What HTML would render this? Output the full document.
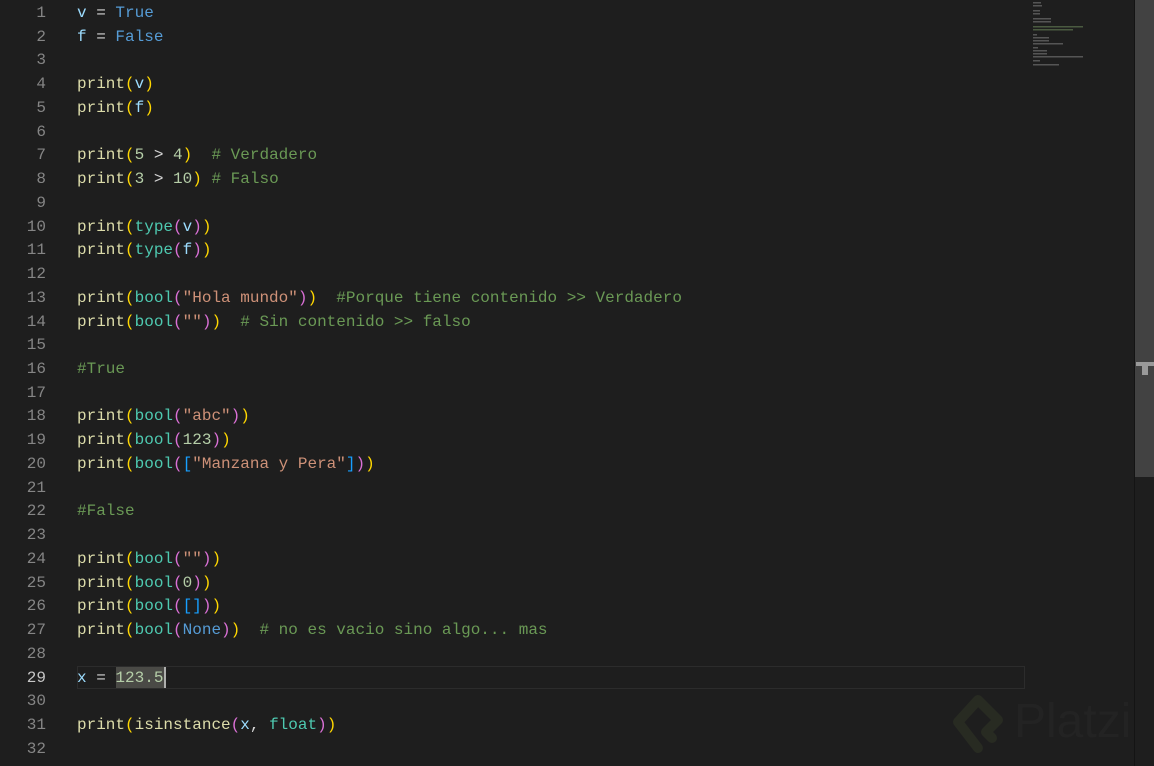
<!DOCTYPE html><html><head><style>
body{margin:0;background:#1e1e1e;width:1154px;height:766px;overflow:hidden;position:relative;font-family:"Liberation Mono",monospace;font-size:16px}
.ln{position:absolute;left:0;width:46px;text-align:right;color:#858585;line-height:23.74px}
.code{position:absolute;left:77px;top:2px;line-height:23.74px;color:#d4d4d4;white-space:pre}
.p{color:#dcdcaa}.g{color:#ffd700}.m{color:#da70d6}.b{color:#179fff}.v{color:#9cdcfe}.k{color:#569cd6}.n{color:#b5cea8}.s{color:#ce9178}.c{color:#6a9955}.t{color:#4ec9b0}
</style></head><body>
<div style="position:absolute;left:77px;top:666px;width:946px;height:21px;border:1px solid #2c2c2c"></div>
<div style="position:absolute;left:116px;top:667px;width:48px;height:21px;background:#4a4a46"></div>
<div style="position:absolute;left:164px;top:667px;width:2px;height:21px;background:#aeafad"></div>
<div class="ln" style="top:2px">1<br>2<br>3<br>4<br>5<br>6<br>7<br>8<br>9<br>10<br>11<br>12<br>13<br>14<br>15<br>16<br>17<br>18<br>19<br>20<br>21<br>22<br>23<br>24<br>25<br>26<br>27<br>28<br><span style="color:#c6c6c6">29</span><br>30<br>31<br>32</div>
<div class="code"><span class="v">v</span> = <span class="k">True</span>
<span class="v">f</span> = <span class="k">False</span>

<span class="p">print</span><span class="g">(</span><span class="v">v</span><span class="g">)</span>
<span class="p">print</span><span class="g">(</span><span class="v">f</span><span class="g">)</span>

<span class="p">print</span><span class="g">(</span><span class="n">5</span> &gt; <span class="n">4</span><span class="g">)</span>  <span class="c"># Verdadero</span>
<span class="p">print</span><span class="g">(</span><span class="n">3</span> &gt; <span class="n">10</span><span class="g">)</span> <span class="c"># Falso</span>

<span class="p">print</span><span class="g">(</span><span class="t">type</span><span class="m">(</span><span class="v">v</span><span class="m">)</span><span class="g">)</span>
<span class="p">print</span><span class="g">(</span><span class="t">type</span><span class="m">(</span><span class="v">f</span><span class="m">)</span><span class="g">)</span>

<span class="p">print</span><span class="g">(</span><span class="t">bool</span><span class="m">(</span><span class="s">"Hola mundo"</span><span class="m">)</span><span class="g">)</span>  <span class="c">#Porque tiene contenido &gt;&gt; Verdadero</span>
<span class="p">print</span><span class="g">(</span><span class="t">bool</span><span class="m">(</span><span class="s">""</span><span class="m">)</span><span class="g">)</span>  <span class="c"># Sin contenido &gt;&gt; falso</span>

<span class="c">#True</span>

<span class="p">print</span><span class="g">(</span><span class="t">bool</span><span class="m">(</span><span class="s">"abc"</span><span class="m">)</span><span class="g">)</span>
<span class="p">print</span><span class="g">(</span><span class="t">bool</span><span class="m">(</span><span class="n">123</span><span class="m">)</span><span class="g">)</span>
<span class="p">print</span><span class="g">(</span><span class="t">bool</span><span class="m">(</span><span class="b">[</span><span class="s">"Manzana y Pera"</span><span class="b">]</span><span class="m">)</span><span class="g">)</span>

<span class="c">#False</span>

<span class="p">print</span><span class="g">(</span><span class="t">bool</span><span class="m">(</span><span class="s">""</span><span class="m">)</span><span class="g">)</span>
<span class="p">print</span><span class="g">(</span><span class="t">bool</span><span class="m">(</span><span class="n">0</span><span class="m">)</span><span class="g">)</span>
<span class="p">print</span><span class="g">(</span><span class="t">bool</span><span class="m">(</span><span class="b">[]</span><span class="m">)</span><span class="g">)</span>
<span class="p">print</span><span class="g">(</span><span class="t">bool</span><span class="m">(</span><span class="k">None</span><span class="m">)</span><span class="g">)</span>  <span class="c"># no es vacio sino algo... mas</span>

<span class="v">x</span> = <span class="n">123.5</span>

<span class="p">print</span><span class="g">(</span><span class="p">isinstance</span><span class="m">(</span><span class="v">x</span>, <span class="t">float</span><span class="m">)</span><span class="g">)</span>
</div>
<svg style="position:absolute;left:1030px;top:0" width="80" height="70">
<g fill="#555"><rect x="3" y="2" width="8" height="1.5"/><rect x="3" y="5" width="9" height="1.5"/><rect x="3" y="10" width="7" height="1.5"/><rect x="3" y="13" width="7" height="1.5"/><rect x="3" y="18" width="18" height="1.5"/><rect x="3" y="21" width="18" height="1.5"/><rect x="3" y="26" width="50" height="1.5" fill="#4a5a40"/><rect x="3" y="29" width="40" height="1.5" fill="#4a5a40"/><rect x="3" y="34" width="4" height="1.5"/><rect x="3" y="37" width="16" height="1.5"/><rect x="3" y="40" width="16" height="1.5"/><rect x="3" y="43" width="30" height="1.5"/><rect x="3" y="47" width="5" height="1.5"/><rect x="3" y="50" width="14" height="1.5"/><rect x="3" y="53" width="14" height="1.5"/><rect x="3" y="56" width="50" height="1.5"/><rect x="3" y="60" width="7" height="1.5"/><rect x="3" y="64" width="26" height="1.5"/></g></svg>
<div style="position:absolute;left:1134px;top:0;width:20px;height:766px;background:#1e1e1e;border-left:1px solid #141414"></div>
<div style="position:absolute;left:1135px;top:0;width:19px;height:477px;background:#424242"></div>
<div style="position:absolute;left:1136px;top:362px;width:18px;height:4px;background:#9a9a9a"></div>
<div style="position:absolute;left:1142px;top:362px;width:6px;height:13px;background:#9a9a9a"></div>
<svg style="position:absolute;left:948px;top:692px" width="60" height="72"><path d="M30 8 L50 28 L38 40 L44 46 M30 8 L10 30 L30 56" fill="none" stroke="#282b22" stroke-width="10" stroke-linejoin="round" stroke-linecap="round"/></svg>
<div style="position:absolute;left:1014px;top:694px;font-family:'Liberation Sans',sans-serif;font-size:48px;color:#232323">Platzi</div>
</body></html>
